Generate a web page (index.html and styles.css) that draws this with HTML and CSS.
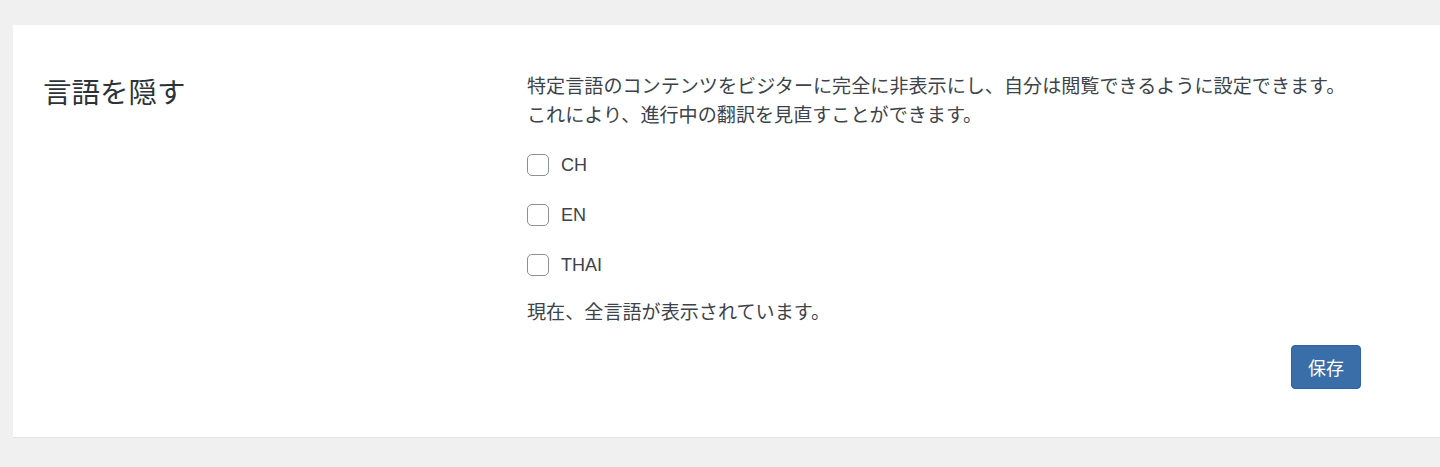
FILE: index.html
```html
<!DOCTYPE html>
<html lang="ja">
<head>
<meta charset="utf-8">
<title>言語を隠す</title>
<link rel="stylesheet" href="styles.css">
</head>
<body>
<div class="page">
  <section class="card">
    <h2 class="card-title">言語を隠す</h2>
    <div class="card-body">
      <p class="desc">特定言語のコンテンツをビジターに完全に非表示にし、自分は閲覧できるように設定できます。<br>これにより、進行中の翻訳を見直すことができます。</p>
      <div class="options">
        <label class="option"><span class="box"></span><span class="option-label">CH</span></label>
        <label class="option"><span class="box"></span><span class="option-label">EN</span></label>
        <label class="option"><span class="box"></span><span class="option-label">THAI</span></label>
      </div>
      <p class="status">現在、全言語が表示されています。</p>
      <div class="actions">
        <button class="btn-save" type="button">保存</button>
      </div>
    </div>
  </section>
</div>
</body>
</html>
```
FILE: styles.css
```css
html, body {
  margin: 0;
  padding: 0;
  background: #f0f0f1;
  overflow: hidden;
}
body {
  font-family: "Liberation Sans", "Noto Sans CJK JP", sans-serif;
  color: #3c434a;
}
.page {
  padding: 25px 0 0 13px;
}
.card {
  background: #fff;
  border-bottom: 1px solid #e2e2e4;
  display: grid;
  grid-template-columns: 482px 834px;
  padding: 47px 0 48px 32px;
}
.card-title {
  margin: 2px 0 0 -2px;
  font-weight: 400;
  font-size: 28.5px;
  line-height: 38px;
  color: #2c3338;
}
.desc {
  margin: 0;
  font-size: 19.1px;
  line-height: 29px;
}
.options {
  display: flex;
  flex-direction: column;
  gap: 28px;
  margin-top: 24px;
}
.option {
  display: flex;
  align-items: center;
  gap: 12px;
  height: 22px;
}
.box {
  width: 20px;
  height: 20px;
  border: 1px solid #8c8f94;
  border-radius: 5px;
  background: #fff;
}
.option-label {
  font-size: 18px;
  color: #3c434a;
}
.status {
  margin: 22px 0 0;
  font-size: 19.1px;
  line-height: 29px;
}
.actions {
  display: flex;
  justify-content: flex-end;
  margin-top: 18px;
}
.btn-save {
  width: 70px;
  height: 44px;
  background: #3a6ea8;
  border: 1px solid #2f62a0;
  border-radius: 4px;
  color: #fff;
  font-family: "Liberation Sans", "Noto Sans CJK JP", sans-serif;
  font-size: 18px;
  padding: 0;
}
```
